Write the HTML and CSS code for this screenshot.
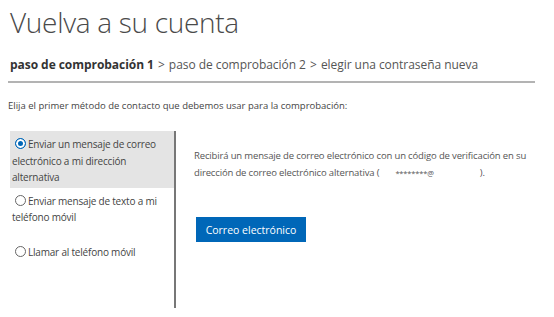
FILE: index.html
```html
<!DOCTYPE html>
<html lang="es">
<head>
  <meta charset="UTF-8">
  <meta name="viewport" content="width=device-width, initial-scale=1.0">
  <title>Vuelva a su cuenta</title>
  <link rel="stylesheet" href="styles.css">
</head>
<body>
  <h1 class="title">Vuelva a su cuenta</h1>

  <div class="steps">
    <span class="step current">paso de comprobación 1</span>
    <span class="sep">&gt;</span>
    <span class="step">paso de comprobación 2</span>
    <span class="sep">&gt;</span>
    <span class="step">elegir una contraseña nueva</span>
  </div>

  <p class="intro">Elija el primer método de contacto que debemos usar para la comprobación:</p>

  <div class="method">
    <ul class="options">
      <li class="option selected"><span class="radio checked"></span>Enviar un mensaje de correo electrónico a mi dirección alternativa</li>
      <li class="option"><span class="radio"></span>Enviar mensaje de texto a mi teléfono móvil</li>
      <li class="option last"><span class="radio"></span>Llamar al teléfono móvil</li>
    </ul>

    <div class="detail">
      <p>Recibirá un mensaje de correo electrónico con un código de verificación en su dirección de correo electrónico alternativa (<span class="mask">********@</span>).</p>
      <button class="btn">Correo electrónico</button>
    </div>
  </div>
</body>
</html>
```

FILE: styles.css
```css
:root {
  --text: #444;
  --text-soft: #555;
  --accent: #0067b8;
  --selected-bg: #e4e4e4;
  --rule: #b3b3b3;
  --font-family: 'Open Sans', 'Noto Sans', sans-serif;
}

body {
  font-family: var(--font-family);
  margin: 0;
  padding: 0 19px 0 8px;
  color: var(--text);
  background: #fff;
}

.title {
  font-size: 28px;
  font-weight: 300;
  color: #4a4a4a;
  margin: 5px 0 0 2px;
  line-height: 34px;
  letter-spacing: -0.3px;
}

.steps {
  font-size: 12px;
  letter-spacing: -0.05px;
  color: var(--text-soft);
  padding: 17px 0 7px 2px;
  border-bottom: 2px solid var(--rule);
  line-height: 18px;
}

.steps .current {
  font-weight: 700;
  color: #333;
}

.steps .sep {
  margin: 0 1px;
}

.intro {
  font-size: 9.5px;
  margin: 16px 0 0;
  line-height: 14px;
}

.method {
  display: flex;
  margin-top: 18px;
  margin-left: 2px;
}

.options {
  list-style: none;
  margin: 0;
  padding: 0;
  width: 164px;
  height: 177px;
  border-right: 2px solid #777;
  font-size: 10px;
  letter-spacing: -0.2px;
  line-height: 16.5px;
}

.option {
  padding: 5px 6px 2px 2px;
}

.option.selected {
  background: var(--selected-bg);
}

.option.last {
  margin-top: 11px;
}

.radio {
  display: inline-block;
  width: 9px;
  height: 9px;
  border: 1px solid #666;
  border-radius: 50%;
  margin: 0 2px 0 3px;
  vertical-align: -1px;
  background: #fff;
}

.radio.checked {
  border-color: var(--accent);
  box-shadow: inset 0 0 0 2px #fff;
  background: var(--accent);
}

.detail {
  padding: 16px 0 0 18px;
  flex: 1;
}

.detail p {
  margin: 0;
  font-size: 9.5px;
  letter-spacing: -0.15px;
  line-height: 17px;
  color: var(--text-soft);
}

.mask {
  display: inline-block;
  margin: 0 46px 0 16px;
  font-size: 7.5px;
  line-height: 10px;
}

.btn {
  margin-top: 36px;
  margin-left: 2px;
  background: var(--accent);
  color: #fff;
  border: none;
  font-family: var(--font-family);
  font-size: 10.5px;
  width: 110px;
  height: 25px;
  padding: 0;
}
```
